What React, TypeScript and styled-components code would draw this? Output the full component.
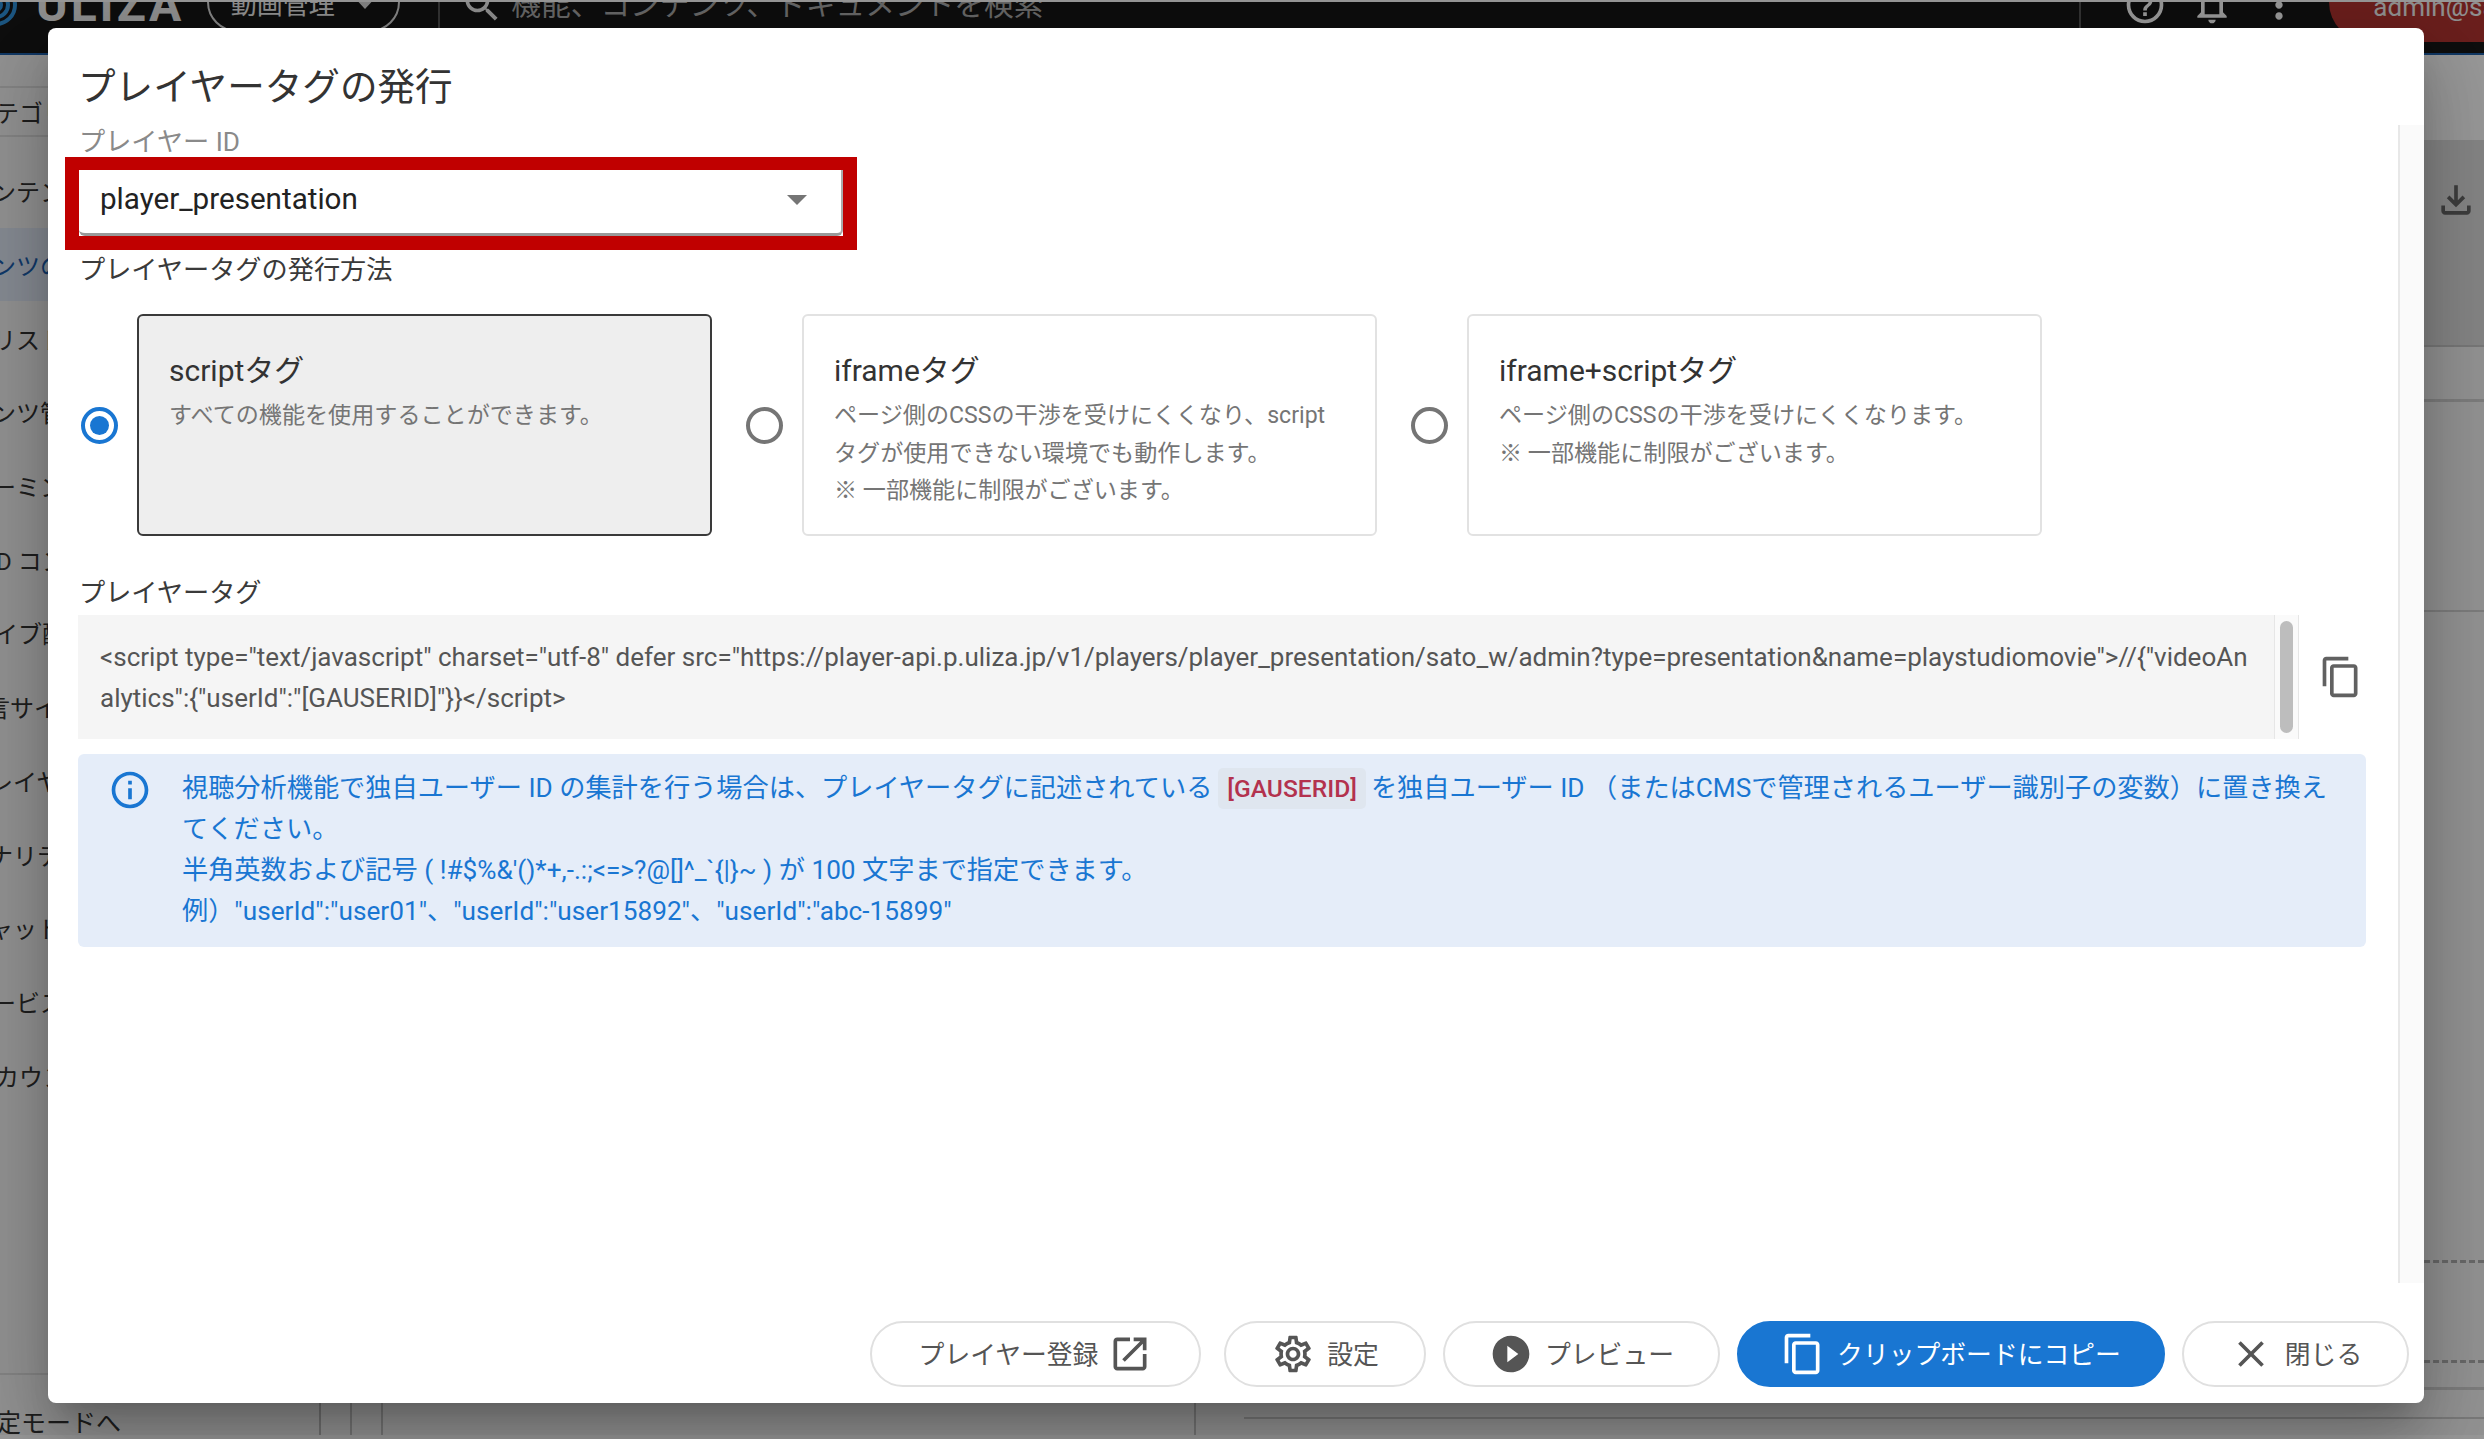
import React from 'react';
import styled, { createGlobalStyle } from 'styled-components';

const GlobalStyle = createGlobalStyle`
  html, body {
    margin: 0;
    padding: 0;
    background: #fff;
    font-family: Roboto, "Noto Sans CJK JP", sans-serif;
  }
  * { box-sizing: border-box; }
`;

const Page = styled.div`
  position: relative;
  width: 2484px;
  height: 1439px;
  overflow: hidden;
  display: flex;
  flex-direction: column;
  background: #fff;
`;

/* ---------- page behind the dialog ---------- */

const TopBar = styled.header`
  flex: 0 0 55px;
  display: flex;
  align-items: flex-start;
  background: #181818;
  border-top: 2px solid #fff;
  border-bottom: 2px solid #1f5fa8;
  overflow: hidden;
`;

const TopRow = styled.div`
  flex: 1;
  height: 6px;
  display: flex;
  align-items: center;
  color: #eee;
`;

const LogoMark = styled.svg`
  flex: 0 0 auto;
  margin-left: -26px;
  margin-right: 18px;
`;

const LogoText = styled.div`
  font-size: 48px;
  font-weight: 700;
  letter-spacing: 3px;
  line-height: 1;
  margin-right: 23px;
`;

const ServicePill = styled.div`
  flex: 0 0 193px;
  height: 60px;
  margin-top: -6px;
  border: 2px solid #ddd;
  border-radius: 30px;
  display: flex;
  align-items: center;
  justify-content: center;
  gap: 18px;
  font-size: 26px;
`;

const Caret = styled.span`
  width: 0;
  height: 0;
  border-left: 12px solid transparent;
  border-right: 12px solid transparent;
  border-top: 13px solid #ddd;
`;

const TopDivider = styled.div<{ $left: number }>`
  flex: 0 0 2px;
  height: 70px;
  margin-left: ${({ $left }) => $left}px;
  background: #555;
`;

const SearchSlot = styled.span`
  flex: 0 0 44px;
  height: 44px;
  margin-left: 20px;
`;

const SearchText = styled.div`
  margin-left: 7px;
  font-size: 29.7px;
  line-height: 1;
  white-space: nowrap;
  color: #aaa;
`;

const TopIcons = styled.div`
  display: flex;
  align-items: center;
  gap: 23px;
  margin-left: 42px;
  color: #fff;
`;

const UserPill = styled.div`
  flex: 1;
  height: 80px;
  margin-left: 28px;
  margin-top: -6px;
  padding-left: 44px;
  border-radius: 40px 0 0 40px;
  background: #b33431;
  color: #f0f0f0;
  font-size: 26px;
  white-space: nowrap;
  overflow: hidden;
  line-height: 90px;
`;

const Shell = styled.div`
  flex: 1;
  min-height: 0;
  display: flex;
`;

const Sidebar = styled.aside`
  flex: 0 0 321px;
  display: flex;
  flex-direction: column;
  padding-top: 31px;
  background: #f4f4f4;
  border-right: 2px solid #bbb;
  overflow: hidden;
`;

const SideHead = styled.div`
  flex: 0 0 51px;
  display: flex;
  align-items: center;
  margin-bottom: 17px;
  border-top: 2px solid #ddd;
  border-bottom: 2px solid #ddd;
  font-size: 24px;
  color: #333;
  white-space: nowrap;
  text-indent: -5px;
`;

const SideRow = styled.div<{ $active?: boolean; $shift: number }>`
  flex: 0 0 73.7px;
  display: flex;
  align-items: center;
  font-size: 24px;
  white-space: nowrap;
  color: ${({ $active }) => ($active ? '#1b5fb0' : '#333')};
  background: ${({ $active }) => ($active ? '#dfe8f6' : 'transparent')};
  text-indent: ${({ $shift }) => $shift}px;
`;

const SideFoot = styled.div`
  margin-top: auto;
  flex: 0 0 62px;
  min-height: 0;
  overflow: hidden;
  padding-top: 31px;
  border-top: 2px solid #ddd;
  font-size: 25px;
  line-height: 36px;
  color: #333;
  white-space: nowrap;
  text-indent: -29px;
`;

const Content = styled.main`
  flex: 1;
  min-width: 0;
  display: flex;
  flex-direction: column;
  background: #f6f6f6;
`;

const Band = styled.section<{ $h?: number; $bg?: string; $line?: string }>`
  flex: ${({ $h }) => ($h ? `0 0 ${$h}px` : '1')};
  display: flex;
  justify-content: flex-end;
  align-items: flex-start;
  background: ${({ $bg }) => $bg || 'transparent'};
  border-bottom: ${({ $line }) => $line || 'none'};
`;

const DownloadSlot = styled.div`
  padding: 38px 6px 0 0;
  color: #666;
`;

const FootGrid = styled.div`
  flex: 1;
  display: grid;
  grid-template-columns: 31px 31px 813px 48px 1fr;
  background: #f6f6f6;
`;

const FootCell = styled.div<{ $ruled?: boolean }>`
  border-right: ${({ $ruled }) => ($ruled ? '2px solid #c4c4c4' : 'none')};
`;

const FootRule = styled.div`
  margin-top: 27px;
  border-top: 2px solid #ccc;
`;

const BottomStrip = styled.div`
  flex: 0 0 4px;
  background: #fff;
`;

/* ---------- dialog ---------- */

const Backdrop = styled.div`
  position: absolute;
  inset: 0;
  background: rgba(0, 0, 0, 0.4);
`;

const Dialog = styled.div`
  position: absolute;
  left: 48px;
  top: 28px;
  width: 2376px;
  height: 1375px;
  display: flex;
  flex-direction: column;
  background: #fff;
  border-radius: 8px;
  overflow: hidden;
  color: #333;
  box-shadow:
    0 20px 28px -12px rgba(0, 0, 0, 0.2),
    0 44px 70px 6px rgba(0, 0, 0, 0.14),
    0 16px 84px 14px rgba(0, 0, 0, 0.12);
`;

const DialogTitle = styled.h2`
  flex: 0 0 97px;
  margin: 0;
  padding: 38px 0 0 30px;
  font-size: 37.6px;
  line-height: 42px;
  font-weight: 400;
  color: #333;
`;

const DialogBody = styled.div`
  flex: 1;
  min-height: 0;
  display: flex;
`;

const DialogScroll = styled.div`
  flex: 1;
  min-width: 0;
  padding: 3px 0 0 30px;
`;

const ScrollTrack = styled.div`
  flex: 0 0 26px;
  background: #fafafa;
  border-left: 2px solid #e8e8e8;
`;

const FieldLabel = styled.div<{ $muted?: boolean; $top: number }>`
  height: 29px;
  padding-left: 1px;
  margin-top: ${({ $top }) => $top}px;
  font-size: 26.2px;
  line-height: 29px;
  color: ${({ $muted }) => ($muted ? '#8a8a8a' : '#3a3a3a')};
`;

const HighlightBox = styled.div`
  width: 792px;
  height: 93px;
  margin-left: -13px;
  border: 14px solid #c00000;
  border-top-width: 13px;
`;

const SelectField = styled.div`
  height: 100%;
  display: flex;
  align-items: center;
  justify-content: space-between;
  padding: 0 34px 0 21px;
  background: #fff;
  border-right: 2px solid #aaa;
  border-bottom: 3px solid #999;
  border-radius: 0 0 6px 6px;
  font-size: 29.6px;
  color: #222;
`;

const SelectLabel = styled.span`
  margin-top: -5px;
`;

const SelectCaret = styled.span`
  width: 0;
  height: 0;
  margin-top: -3px;
  border-left: 10px solid transparent;
  border-right: 10px solid transparent;
  border-top: 10px solid #757575;
`;

const OptionRow = styled.div`
  display: flex;
  align-items: stretch;
  margin-top: 29px;
  padding-left: 3px;
`;

const OptionItem = styled.label`
  flex: 0 0 665px;
  display: flex;
  align-items: center;
`;

const RadioRing = styled.span<{ $checked?: boolean }>`
  flex: 0 0 37px;
  height: 37px;
  display: flex;
  align-items: center;
  justify-content: center;
  margin-right: 19px;
  border-radius: 50%;
  border: 4px solid ${({ $checked }) => ($checked ? '#1976d2' : '#757575')};
`;

const RadioDot = styled.span`
  width: 19px;
  height: 19px;
  border-radius: 50%;
  background: #1976d2;
`;

const OptionCard = styled.div<{ $selected?: boolean }>`
  flex: 0 0 575px;
  height: 222px;
  padding: 35px 20px 0 30px;
  border: 2px solid ${({ $selected }) => ($selected ? '#3a3a3a' : '#e2e2e2')};
  border-radius: 6px;
  background: ${({ $selected }) => ($selected ? '#eeeeee' : '#fff')};
`;

const CardTitle = styled.div`
  font-size: 30px;
  line-height: 40px;
  color: #333;
`;

const CardText = styled.div`
  margin-top: 6px;
  font-size: 23.1px;
  line-height: 37.5px;
  color: #757575;
`;

const TagRow = styled.div`
  display: flex;
  align-items: center;
  gap: 20px;
  margin-top: 7px;
`;

const TagBox = styled.div`
  flex: 0 0 2221px;
  height: 124px;
  display: flex;
  background: #f5f5f5;
`;

const TagText = styled.div`
  flex: 1;
  min-width: 0;
  padding: 22px 22px 0;
  font-size: 26px;
  line-height: 41px;
  color: #555;
  word-break: break-all;
`;

const TagScrollbar = styled.div`
  flex: 0 0 25px;
  padding: 6px 5px;
  background: #fafafa;
  border-left: 1px solid #e6e6e6;
  border-right: 1px solid #e6e6e6;
`;

const TagThumb = styled.div`
  height: 100%;
  border-radius: 8px;
  background: #bdbdbd;
`;

const IconSlot = styled.span<{ $color?: string }>`
  flex: 0 0 44px;
  height: 44px;
  display: block;
  color: ${({ $color }) => $color || 'inherit'};
`;

const InfoAlert = styled.div`
  width: 2288px;
  height: 193px;
  display: flex;
  gap: 30px;
  margin-top: 15px;
  padding: 14px 30px 0;
  border-radius: 6px;
  background: #e5edf9;
  color: #1976d2;
`;

const AlertText = styled.div`
  flex: 1;
  min-width: 0;
  font-size: 26.2px;
  line-height: 41px;
`;

const CodeChip = styled.code`
  display: inline-block;
  margin: 0 5px 0 6px;
  padding: 0 9px;
  height: 41px;
  line-height: 41px;
  vertical-align: top;
  border-radius: 5px;
  background: #dfe6ef;
  color: #b3324e;
  font-family: inherit;
  font-size: 24.6px;
  font-weight: 500;
`;

const DialogFooter = styled.div`
  flex: 0 0 120px;
  display: flex;
  align-items: flex-end;
  justify-content: flex-end;
  gap: 17px;
  padding: 0 15px 16px 0;
`;

const FooterButton = styled.button<{ $w: number; $primary?: boolean; $gap?: number; $after?: number }>`
  width: ${({ $w }) => $w}px;
  height: 66px;
  display: flex;
  align-items: center;
  justify-content: center;
  gap: ${({ $gap }) => $gap ?? 12}px;
  margin-right: ${({ $after }) => $after ?? 0}px;
  padding: 0;
  border: 2px solid ${({ $primary }) => ($primary ? '#1976d2' : '#e0e0e0')};
  border-radius: 33px;
  background: ${({ $primary }) => ($primary ? '#1976d2' : '#fff')};
  color: ${({ $primary }) => ($primary ? '#fff' : '#555')};
  font-family: inherit;
  font-size: 25.8px;
`;

const ButtonLabel = styled.span`
  margin-top: -3px;
`;

const Icon = ({ d, size = 44 }: { d: string; size?: number }) => (
  <svg width={size} height={size} viewBox="0 0 24 24" fill="currentColor" style={{ display: 'block', flex: 'none' }}>
    <path d={d} />
  </svg>
);

const COPY = 'M16 1H4c-1.1 0-2 .9-2 2v14h2V3h12V1zm3 4H8c-1.1 0-2 .9-2 2v14c0 1.1.9 2 2 2h11c1.1 0 2-.9 2-2V7c0-1.1-.9-2-2-2zm0 16H8V7h11v14z';
const INFO = 'M11 7h2v2h-2zm0 4h2v6h-2zm1-9C6.48 2 2 6.48 2 12s4.48 10 10 10 10-4.48 10-10S17.52 2 12 2zm0 18c-4.41 0-8-3.59-8-8s3.59-8 8-8 8 3.59 8 8-3.59 8-8 8z';
const OPEN = 'M19 19H5V5h7V3H5c-1.11 0-2 .9-2 2v14c0 1.1.89 2 2 2h14c1.1 0 2-.9 2-2v-7h-2v7zM14 3v2h3.59l-9.83 9.83 1.41 1.41L19 6.41V10h2V3h-7z';
const GEAR = 'M19.43 12.98c.04-.32.07-.64.07-.98 0-.34-.03-.66-.07-.98l2.11-1.65c.19-.15.24-.42.12-.64l-2-3.46c-.09-.16-.26-.25-.44-.25-.06 0-.12.01-.17.03l-2.49 1c-.52-.4-1.08-.73-1.69-.98l-.38-2.65C14.46 2.18 14.25 2 14 2h-4c-.25 0-.46.18-.49.42l-.38 2.65c-.61.25-1.17.59-1.69.98l-2.49-1c-.06-.02-.12-.03-.18-.03-.17 0-.34.09-.43.25l-2 3.46c-.13.22-.07.49.12.64l2.11 1.65c-.04.32-.07.65-.07.98 0 .33.03.66.07.98l-2.11 1.65c-.19.15-.24.42-.12.64l2 3.46c.09.16.26.25.44.25.06 0 .12-.01.17-.03l2.49-1c.52.4 1.08.73 1.69.98l.38 2.65c.03.24.24.42.49.42h4c.25 0 .46-.18.49-.42l.38-2.65c.61-.25 1.17-.59 1.69-.98l2.49 1c.06.02.12.03.18.03.17 0 .34-.09.43-.25l2-3.46c.12-.22.07-.49-.12-.64l-2.11-1.65zm-1.98-1.71c.04.31.05.52.05.73 0 .21-.02.43-.05.73l-.14 1.13.89.7 1.08.84-.7 1.21-1.27-.51-1.04-.42-.9.68c-.43.32-.84.56-1.25.73l-1.06.43-.16 1.13-.2 1.35h-1.4l-.19-1.35-.16-1.13-1.06-.43c-.43-.18-.83-.41-1.23-.71l-.91-.7-1.06.43-1.27.51-.7-1.21 1.08-.84.89-.7-.14-1.13c-.03-.31-.05-.54-.05-.74s.02-.43.05-.73l.14-1.13-.89-.7-1.08-.84.7-1.21 1.27.51 1.04.42.9-.68c.43-.32.84-.56 1.25-.73l1.06-.43.16-1.13.2-1.35h1.39l.19 1.35.16 1.13 1.06.43c.43.18.83.41 1.23.71l.91.7 1.06-.43 1.27-.51.7 1.21-1.07.85-.89.7.14 1.13zM12 8c-2.21 0-4 1.79-4 4s1.79 4 4 4 4-1.79 4-4-1.79-4-4-4zm0 6c-1.1 0-2-.9-2-2s.9-2 2-2 2 .9 2 2-.9 2-2 2z';
const PLAY = 'M12 2C6.48 2 2 6.48 2 12s4.48 10 10 10 10-4.48 10-10S17.52 2 12 2zm-2 14.5v-9l6 4.5-6 4.5z';
const CLOSE = 'M19 6.41L17.59 5 12 10.59 6.41 5 5 6.41 10.59 12 5 17.59 6.41 19 12 13.41 17.59 19 19 17.59 13.41 12z';
const DOWNLOAD = 'M18 15v3H6v-3H4v3c0 1.1.9 2 2 2h12c1.1 0 2-.9 2-2v-3h-2zm-1-4l-1.41-1.41L13 12.17V4h-2v8.17L8.41 9.59 7 11l5 5 5-5z';
const SEARCH = 'M15.5 14h-.79l-.28-.27C15.41 12.59 16 11.11 16 9.5 16 5.91 13.09 3 9.5 3S3 5.91 3 9.5 5.91 16 9.5 16c1.61 0 3.09-.59 4.23-1.57l.27.28v.79l5 4.99L20.49 19l-4.99-5zm-6 0C7.01 14 5 11.99 5 9.5S7.01 5 9.5 5 14 7.01 14 9.5 11.99 14 9.5 14z';
const HELP = 'M11 18h2v-2h-2v2zm1-16C6.48 2 2 6.48 2 12s4.48 10 10 10 10-4.48 10-10S17.52 2 12 2zm0 18c-4.41 0-8-3.59-8-8s3.59-8 8-8 8 3.59 8 8-3.59 8-8 8zm0-14c-2.21 0-4 1.79-4 4h2c0-1.1.9-2 2-2s2 .9 2 2c0 2-3 1.75-3 5h2c0-2.25 3-2.5 3-5 0-2.21-1.79-4-4-4z';
const BELL = 'M12 22c1.1 0 2-.9 2-2h-4c0 1.1.9 2 2 2zm6-6v-5c0-3.07-1.63-5.64-4.5-6.32V4c0-.83-.67-1.5-1.5-1.5s-1.5.67-1.5 1.5v.68C7.64 5.36 6 7.92 6 11v5l-2 2v1h16v-1l-2-2zm-2 1H8v-6c0-2.48 1.51-4.5 4-4.5s4 2.02 4 4.5v6z';
const DOTS = 'M12 8c1.1 0 2-.9 2-2s-.9-2-2-2-2 .9-2 2 .9 2 2 2zm0 2c-1.1 0-2 .9-2 2s.9 2 2 2 2-.9 2-2-.9-2-2-2zm0 6c-1.1 0-2 .9-2 2s.9 2 2 2 2-.9 2-2-.9-2-2-2z';

const sideItems: { label: string; shift: number; active?: boolean }[] = [
  { label: 'ンテンツ', shift: -8 },
  { label: 'ンツの管理', shift: -8, active: true },
  { label: 'リスト', shift: -8 },
  { label: 'ンツ管理', shift: -8 },
  { label: 'ーミング', shift: -8 },
  { label: 'D コンテンツ', shift: -4 },
  { label: 'イブ配信', shift: -6 },
  { label: '言サイト', shift: -14 },
  { label: 'レイヤー', shift: -11 },
  { label: 'ナリティクス', shift: -11 },
  { label: 'ャット', shift: -11 },
  { label: 'ービス', shift: -8 },
  { label: 'カウント', shift: -5 },
];

const options = [
  {
    title: 'scriptタグ',
    lines: ['すべての機能を使用することができます。'],
    checked: true,
  },
  {
    title: 'iframeタグ',
    lines: ['ページ側のCSSの干渉を受けにくくなり、script', 'タグが使用できない環境でも動作します。', '※ 一部機能に制限がございます。'],
  },
  {
    title: 'iframe+scriptタグ',
    lines: ['ページ側のCSSの干渉を受けにくくなります。', '※ 一部機能に制限がございます。'],
  },
];

export default function App() {
  return (
    <Page>
      <GlobalStyle />
      <TopBar>
        <TopRow>
          <LogoMark width="44" height="44" viewBox="0 0 44 44" fill="none" stroke="#2f8fd8" strokeWidth="4">
            <circle cx="22" cy="22" r="19" />
            <circle cx="22" cy="22" r="12" />
            <circle cx="22" cy="22" r="5" />
          </LogoMark>
          <LogoText>ULIZA</LogoText>
          <ServicePill>
            動画管理
            <Caret />
          </ServicePill>
          <TopDivider $left={38} />
          <SearchSlot>
            <Icon d={SEARCH} />
          </SearchSlot>
          <SearchText>機能、コンテンツ、ドキュメントを検索</SearchText>
          <TopDivider $left={1036} />
          <TopIcons>
            <IconSlot>
              <Icon d={HELP} />
            </IconSlot>
            <IconSlot>
              <Icon d={BELL} />
            </IconSlot>
            <IconSlot>
              <Icon d={DOTS} />
            </IconSlot>
          </TopIcons>
          <UserPill>admin@sato</UserPill>
        </TopRow>
      </TopBar>

      <Shell>
        <Sidebar>
          <SideHead>テゴリ</SideHead>
          {sideItems.map(item => (
            <SideRow key={item.label} $shift={item.shift} $active={item.active}>
              {item.label}
            </SideRow>
          ))}
          <SideFoot>設定モードへ</SideFoot>
        </Sidebar>
        <Content>
          <Band $h={85} $bg="#fdfdfd" />
          <Band $h={207} $bg="#dedede" $line="2px solid #c8c8c8">
            <DownloadSlot>
              <Icon d={DOWNLOAD} />
            </DownloadSlot>
          </Band>
          <Band $h={55} $line="3px solid #d0d0d0" />
          <Band $h={210} $line="2px solid #d0d0d0" />
          <Band $h={651} $line="3px dashed #b0b0b0" />
          <Band $h={100} $line="3px dashed #b0b0b0" />
          <Band $h={27} $line="3px solid #d0d0d0" />
          <FootGrid>
            <FootCell $ruled />
            <FootCell $ruled />
            <FootCell $ruled />
            <FootCell />
            <FootRule />
          </FootGrid>
        </Content>
      </Shell>
      <BottomStrip />

      <Backdrop />
      <Dialog>
        <DialogTitle>プレイヤータグの発行</DialogTitle>
        <DialogBody>
          <DialogScroll>
            <FieldLabel $muted $top={0}>プレイヤー ID</FieldLabel>
            <HighlightBox>
              <SelectField>
                <SelectLabel>player_presentation</SelectLabel>
                <SelectCaret />
              </SelectField>
            </HighlightBox>
            <FieldLabel $top={6}>プレイヤータグの発行方法</FieldLabel>
            <OptionRow>
              {options.map(option => (
                <OptionItem key={option.title}>
                  <RadioRing $checked={option.checked}>{option.checked && <RadioDot />}</RadioRing>
                  <OptionCard $selected={option.checked}>
                    <CardTitle>{option.title}</CardTitle>
                    <CardText>
                      {option.lines.map(line => (
                        <div key={line}>{line}</div>
                      ))}
                    </CardText>
                  </OptionCard>
                </OptionItem>
              ))}
            </OptionRow>
            <FieldLabel $top={43}>プレイヤータグ</FieldLabel>
            <TagRow>
              <TagBox>
                <TagText>
                  {'<script type="text/javascript" charset="utf-8" defer src="https://player-api.p.uliza.jp/v1/players/player_presentation/sato_w/admin?type=presentation&name=playstudiomovie">//{"videoAnalytics":{"userId":"[GAUSERID]"}}</script>'}
                </TagText>
                <TagScrollbar>
                  <TagThumb />
                </TagScrollbar>
              </TagBox>
              <IconSlot $color="#616161">
                <Icon d={COPY} />
              </IconSlot>
            </TagRow>
            <InfoAlert>
              <Icon d={INFO} />
              <AlertText>
                視聴分析機能で独自ユーザー ID の集計を行う場合は、プレイヤータグに記述されている
                <CodeChip>[GAUSERID]</CodeChip>
                を独自ユーザー ID （またはCMSで管理されるユーザー識別子の変数）に置き換えてください。
                <br />
                半角英数および記号 ( !#$%&'()*+,-.:;&lt;=&gt;?@[]^_`{'{|}'}~ ) が 100 文字まで指定できます。
                <br />
                例）"userId":"user01"、"userId":"user15892"、"userId":"abc-15899"
              </AlertText>
            </InfoAlert>
          </DialogScroll>
          <ScrollTrack />
        </DialogBody>
        <DialogFooter>
          <FooterButton $w={331} $gap={10} $after={6}>
            <ButtonLabel>プレイヤー登録</ButtonLabel>
            <IconSlot>
              <Icon d={OPEN} />
            </IconSlot>
          </FooterButton>
          <FooterButton $w={202}>
            <IconSlot>
              <Icon d={GEAR} />
            </IconSlot>
            <ButtonLabel>設定</ButtonLabel>
          </FooterButton>
          <FooterButton $w={277}>
            <IconSlot>
              <Icon d={PLAY} />
            </IconSlot>
            <ButtonLabel>プレビュー</ButtonLabel>
          </FooterButton>
          <FooterButton $w={428} $primary>
            <IconSlot>
              <Icon d={COPY} />
            </IconSlot>
            <ButtonLabel>クリップボードにコピー</ButtonLabel>
          </FooterButton>
          <FooterButton $w={227}>
            <IconSlot>
              <Icon d={CLOSE} />
            </IconSlot>
            <ButtonLabel>閉じる</ButtonLabel>
          </FooterButton>
        </DialogFooter>
      </Dialog>
    </Page>
  );
}
